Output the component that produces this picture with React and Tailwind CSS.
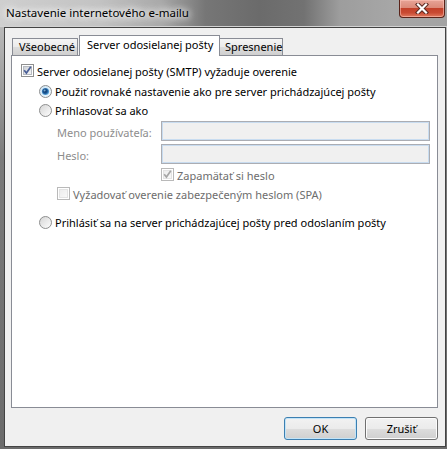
import React from "react";

function CheckBox({ checked, disabled }) {
  return (
    <svg width="13" height="13" viewBox="0 0 13 13" className="shrink-0">
      <defs>
        <linearGradient id="cbIn" x1="0" y1="0" x2="1" y2="1">
          <stop offset="0" stopColor="#cbcfd5" />
          <stop offset="1" stopColor="#f7f7f7" />
        </linearGradient>
        <linearGradient id="cbInD" x1="0" y1="0" x2="1" y2="1">
          <stop offset="0" stopColor="#ececec" />
          <stop offset="1" stopColor="#f9f9f9" />
        </linearGradient>
      </defs>
      <rect x="0.5" y="0.5" width="12" height="12" fill="#fff" stroke={disabled ? "#b9b9b9" : "#8e8f8f"} />
      <rect
        x="2.5"
        y="2.5"
        width="8"
        height="8"
        fill={disabled ? "url(#cbInD)" : "url(#cbIn)"}
        stroke={disabled ? "#e3e3e3" : "#b6bac0"}
      />
      {checked && (
        <path
          d="M3.2 6.3 L5.4 9 L9.8 2.8"
          fill="none"
          stroke={disabled ? "#a6a6a6" : "#4a5f97"}
          strokeWidth="1.7"
        />
      )}
    </svg>
  );
}

function Radio({ checked }) {
  return (
    <svg width="13" height="13" viewBox="0 0 13 13" className="shrink-0">
      <defs>
        <linearGradient id="rbg" x1="0" y1="0" x2="1" y2="1">
          <stop offset="0" stopColor="#d4d4d4" />
          <stop offset="1" stopColor="#ffffff" />
        </linearGradient>
        <linearGradient id="rbgC" x1="0" y1="0" x2="1" y2="1">
          <stop offset="0" stopColor="#c9e3f5" />
          <stop offset="1" stopColor="#f4fafe" />
        </linearGradient>
        <radialGradient id="rdot" cx="0.45" cy="0.45" r="0.55">
          <stop offset="0" stopColor="#0d3466" />
          <stop offset="0.55" stopColor="#1b5592" />
          <stop offset="1" stopColor="#63b1e6" />
        </radialGradient>
      </defs>
      <circle cx="6.5" cy="6.5" r="6" fill={checked ? "url(#rbgC)" : "url(#rbg)"} stroke="#8e8f8f" />
      {checked && <circle cx="6.5" cy="6.5" r="3.6" fill="url(#rdot)" />}
      {checked && <circle cx="5.6" cy="5.4" r="1" fill="#9fd6f7" opacity="0.7" />}
    </svg>
  );
}

function Input() {
  return (
    <div className="w-[269px] h-[20px] border border-[#abadb3] bg-[#f0f0f0] shadow-[inset_0_0_0_1px_#c8dcf0]" />
  );
}

export default function App() {
  return (
    <div className="w-[447px] h-[449px] overflow-hidden relative font-['Noto_Sans',sans-serif] text-[11px] text-black bg-[linear-gradient(180deg,#c4c4c4_0%,#adadad_12%,#7a7a7a_35%,#6b6b6b_100%)]">
      {/* Title bar */}
      <div className="h-[27px] flex items-center border-b border-[#d2d2d2] bg-[linear-gradient(90deg,#cfcfcf_0%,#c3c3c3_22%,#a9a9a9_36%,#767676_46%,#6b6b6b_58%,#727272_68%,#9d9d9d_76%,#a7a7a7_88%,#a3a3a3_100%)]">
        <span className="pl-[6px] pb-[1px] leading-[15px] text-[11.5px] text-black [text-shadow:0_0_6px_#fff,0_0_10px_#fff,0_0_12px_#fff]">
          Nastavenie internetového e-mailu
        </span>
      </div>
      <div className="absolute top-0 right-[2px] w-[46px] h-[18px] rounded-b-[4px] border border-t-0 border-[#5a2319] bg-[linear-gradient(180deg,#e7a497_0%,#dc8a79_45%,#c3412a_50%,#c94a32_75%,#e07a5f_100%)] shadow-[inset_0_0_0_1px_rgba(255,200,190,0.55)] flex items-center justify-center">
        <svg width="14" height="11" viewBox="0 0 14 11">
          <path d="M3 1.5 L11 9.5 M11 1.5 L3 9.5" stroke="#5b2a22" strokeWidth="4.2" strokeLinecap="square" fill="none" />
          <path d="M3 1.5 L11 9.5 M11 1.5 L3 9.5" stroke="#ffffff" strokeWidth="2.2" strokeLinecap="square" fill="none" />
        </svg>
      </div>

      {/* Client area */}
      <div className="ml-[4px] w-[442px] h-[420px] border border-[#434343] bg-[#f0f0f0] flex flex-col pt-[7px] pl-[6px] pr-[7px]">
        {/* Tabs */}
        <div className="h-[20px] flex items-end pl-[1px] relative z-10">
          <div className="w-[66px] h-[17px] border border-b-0 border-[#898c95] bg-[linear-gradient(180deg,#f4f4f4_0%,#ebebeb_50%,#dddddd_51%,#cfcfcf_100%)] pl-[6px] leading-[15px] mb-0">
            Všeobecné
          </div>
          <div className="w-[1px]" />
          <div className="w-[141px] h-[21px] -mb-[1px] border border-b-0 border-[#898c95] bg-white pl-[7px] pt-[1px] leading-[15px] self-end">
            Server odosielanej pošty
          </div>
          <div className="w-[63px] h-[17px] border border-l-0 border-b-0 border-[#898c95] bg-[linear-gradient(180deg,#f4f4f4_0%,#ebebeb_50%,#dddddd_51%,#cfcfcf_100%)] pl-[5px] leading-[15px]">
            Spresnenie
          </div>
        </div>

        {/* Panel */}
        <div className="w-[427px] h-[353px] border border-[#898c95] bg-white flex flex-col pt-[8px] pl-[9px]">
          <div className="h-[13px] flex items-center gap-[3px]">
            <CheckBox checked />
            <span className="leading-[15px] pt-[1px]">Server odosielanej pošty (SMTP) vyžaduje overenie</span>
          </div>
          <div className="h-[13px] mt-[8px] ml-[18px] flex items-center gap-[3px]">
            <Radio checked />
            <span className="leading-[15px]">Použiť rovnaké nastavenie ako pre server prichádzajúcej pošty</span>
          </div>
          <div className="h-[13px] mt-[6px] ml-[18px] flex items-center gap-[3px]">
            <Radio />
            <span className="leading-[15px]">Prihlasovať sa ako</span>
          </div>
          <div className="h-[20px] mt-[4px] ml-[36px] flex items-center">
            <span className="w-[104px] leading-[15px] pt-[2px] text-[#8d8d8d]">Meno používateľa:</span>
            <Input />
          </div>
          <div className="h-[20px] mt-[3px] ml-[36px] flex items-center">
            <span className="w-[104px] leading-[15px] pt-[2px] text-[#8d8d8d]">Heslo:</span>
            <Input />
          </div>
          <div className="h-[13px] mt-[4px] ml-[140px] flex items-center gap-[3px]">
            <CheckBox checked disabled />
            <span className="leading-[15px] pt-[1px] text-[#6d6d6d]">Zapamätať si heslo</span>
          </div>
          <div className="h-[13px] mt-[6px] ml-[36px] flex items-center gap-[3px]">
            <CheckBox disabled />
            <span className="leading-[15px] pt-[1px] text-[#6d6d6d]">Vyžadovať overenie zabezpečeným heslom (SPA)</span>
          </div>
          <div className="h-[13px] mt-[16px] ml-[18px] flex items-center gap-[3px]">
            <Radio />
            <span className="leading-[15px]">Prihlásiť sa na server prichádzajúcej pošty pred odoslaním pošty</span>
          </div>
        </div>

        {/* Buttons */}
        <div className="mt-[9px] flex justify-end gap-[8px]">
          <button className="w-[73px] h-[23px] rounded-[3px] border border-[#3c7fb1] bg-[linear-gradient(180deg,#f2f2f2_0%,#ebebeb_50%,#dddddd_51%,#cfcfcf_100%)] shadow-[inset_0_0_0_1px_#c2e4f8] leading-[15px] text-black">
            OK
          </button>
          <button className="w-[73px] h-[23px] rounded-[3px] border border-[#707070] bg-[linear-gradient(180deg,#f2f2f2_0%,#ebebeb_50%,#dddddd_51%,#cfcfcf_100%)] shadow-[inset_0_0_0_1px_#fcfcfc] leading-[15px] text-black">
            Zrušiť
          </button>
        </div>
      </div>
    </div>
  );
}
